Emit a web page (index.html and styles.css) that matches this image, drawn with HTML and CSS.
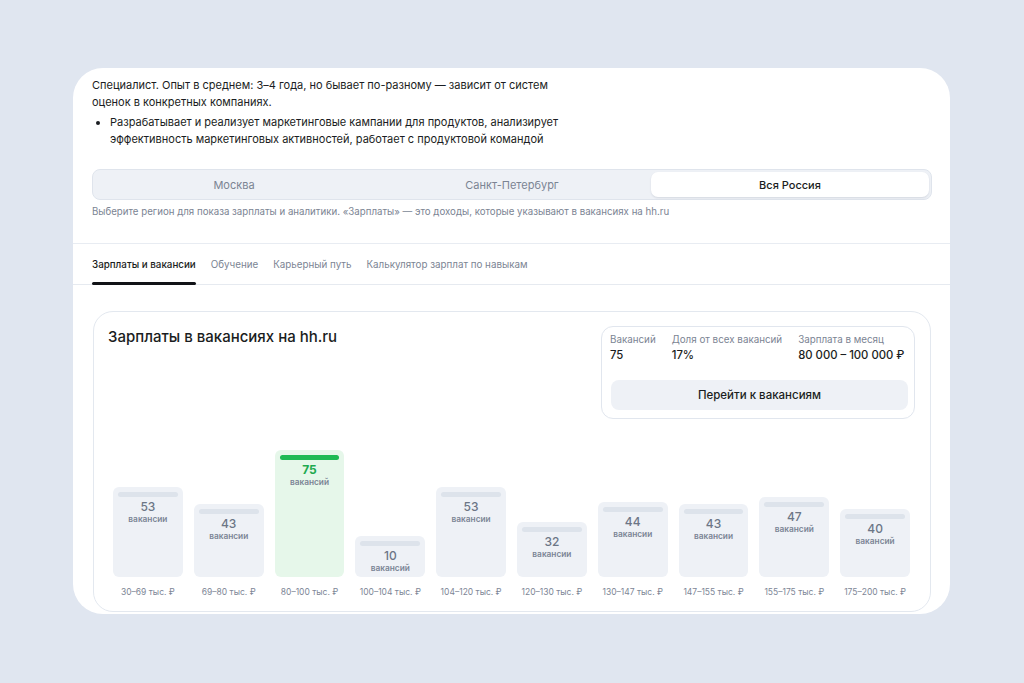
FILE: index.html
```html
<!DOCTYPE html>
<html lang="ru">
<head>
<meta charset="utf-8">
<title>Зарплаты</title>
<link rel="stylesheet" href="styles.css">
</head>
<body>
<div class="frame">
  <section class="intro">
    <p class="lead">Специалист. Опыт в среднем: 3–4 года, но бывает по-разному — зависит от систем<br>оценок в конкретных компаниях.</p>
    <ul class="duties">
      <li>Разрабатывает и реализует маркетинговые кампании для продуктов, анализирует<br>эффективность маркетинговых активностей, работает с продуктовой командой</li>
    </ul>
    <div class="segmented">
      <span class="seg">Москва</span>
      <span class="seg">Санкт-Петербург</span>
      <span class="seg seg-active">Вся Россия</span>
    </div>
    <p class="hint">Выберите регион для показа зарплаты и аналитики. «Зарплаты» — это доходы, которые указывают в вакансиях на hh.ru</p>
  </section>

  <nav class="tabs">
    <span class="tab tab-active">Зарплаты и вакансии</span>
    <span class="tab">Обучение</span>
    <span class="tab">Карьерный путь</span>
    <span class="tab">Калькулятор зарплат по навыкам</span>
  </nav>

  <section class="chart-card">
    <div class="chart-head">
      <h2 class="chart-title">Зарплаты в вакансиях на hh.ru</h2>
      <div class="stats">
        <div class="stats-row">
          <div class="stat"><div class="stat-label">Вакансий</div><div class="stat-value">75</div></div>
          <div class="stat"><div class="stat-label">Доля от всех вакансий</div><div class="stat-value">17%</div></div>
          <div class="stat"><div class="stat-label">Зарплата в месяц</div><div class="stat-value">80 000 – 100 000 ₽</div></div>
        </div>
        <button class="stats-btn">Перейти к вакансиям</button>
      </div>
    </div>

    <div class="bars">
      <div class="bar-col"><div class="bar" style="height:90px"><i class="pill"></i><b class="num">53</b><span class="unit">вакансии</span></div><span class="range">30–69 тыс. ₽</span></div>
      <div class="bar-col"><div class="bar" style="height:73px"><i class="pill"></i><b class="num">43</b><span class="unit">вакансии</span></div><span class="range">69–80 тыс. ₽</span></div>
      <div class="bar-col"><div class="bar bar-active" style="height:127px"><i class="pill"></i><b class="num">75</b><span class="unit">вакансий</span></div><span class="range">80–100 тыс. ₽</span></div>
      <div class="bar-col"><div class="bar" style="height:41px"><i class="pill"></i><b class="num">10</b><span class="unit">вакансий</span></div><span class="range">100–104 тыс. ₽</span></div>
      <div class="bar-col"><div class="bar" style="height:90px"><i class="pill"></i><b class="num">53</b><span class="unit">вакансии</span></div><span class="range">104–120 тыс. ₽</span></div>
      <div class="bar-col"><div class="bar" style="height:55px"><i class="pill"></i><b class="num">32</b><span class="unit">вакансии</span></div><span class="range">120–130 тыс. ₽</span></div>
      <div class="bar-col"><div class="bar" style="height:75px"><i class="pill"></i><b class="num">44</b><span class="unit">вакансии</span></div><span class="range">130–147 тыс. ₽</span></div>
      <div class="bar-col"><div class="bar" style="height:73px"><i class="pill"></i><b class="num">43</b><span class="unit">вакансии</span></div><span class="range">147–155 тыс. ₽</span></div>
      <div class="bar-col"><div class="bar" style="height:80px"><i class="pill"></i><b class="num">47</b><span class="unit">вакансий</span></div><span class="range">155–175 тыс. ₽</span></div>
      <div class="bar-col"><div class="bar" style="height:68px"><i class="pill"></i><b class="num">40</b><span class="unit">вакансий</span></div><span class="range">175–200 тыс. ₽</span></div>
    </div>
  </section>
</div>
</body>
</html>
```

FILE: styles.css
```css
* { box-sizing: border-box; }

html, body {
  margin: 0;
  padding: 0;
}

body {
  width: 1024px;
  height: 683px;
  overflow: hidden;
  background: #e0e6f0;
  font-family: Inter, "Noto Sans", "Liberation Sans", sans-serif;
  color: #1f2329;
  padding: 68px 0 0 73px;
}

.frame {
  width: 877px;
  height: 546px;
  background: #ffffff;
  border-radius: 30px;
  overflow: hidden;
}

/* intro */
.intro {
  padding: 9px 18px 24px 19px;
  border-bottom: 1px solid #e8ecf2;
}

.lead {
  margin: 0;
  font-size: 11px;
  line-height: 17px;
  color: #1a1d22;
}

.duties {
  margin: 3px 0 0;
  padding: 0 0 0 18px;
  font-size: 11px;
  line-height: 17px;
  color: #1a1d22;
}

.segmented {
  margin-top: 21px;
  height: 31px;
  display: grid;
  grid-template-columns: repeat(3, 1fr);
  padding: 2px;
  background: #eef1f6;
  border: 1px solid #dfe4ec;
  border-radius: 8px;
}

.seg {
  display: flex;
  align-items: center;
  justify-content: center;
  font-size: 11px;
  color: #7b8493;
  border-radius: 7px;
}

.seg-active {
  background: #ffffff;
  color: #1a1d21;
  font-weight: 500;
  box-shadow: 0 1px 2px rgba(30, 45, 70, 0.12);
}

.hint {
  margin: 5px 0 0;
  font-size: 9.7px;
  line-height: 14px;
  color: #7b8493;
}

/* tabs */
.tabs {
  display: flex;
  gap: 15px;
  padding: 0 19px;
  height: 41px;
  border-bottom: 1px solid #e6eaf0;
}

.tab {
  position: relative;
  padding-top: 14px;
  font-size: 9.8px;
  line-height: 14px;
  color: #7b8493;
}

.tab-active {
  color: #1a1d21;
  font-weight: 500;
}

.tab-active::after {
  content: "";
  position: absolute;
  left: 0;
  right: 0;
  bottom: -1px;
  height: 3px;
  border-radius: 2px;
  background: #111317;
}

/* chart card */
.chart-card {
  margin: 26px 19px 0 20px;
  height: 301px;
  border: 1px solid #e3e8ef;
  border-radius: 20px;
}

.chart-head {
  display: flex;
  justify-content: space-between;
  align-items: flex-start;
  padding: 14px 15px 0 14px;
}

.chart-title {
  margin: 1px 0 0;
  font-size: 15px;
  line-height: 20px;
  font-weight: 500;
  color: #1a1d21;
}

.stats {
  width: 314px;
  height: 93px;
  border: 1px solid #e1e6ee;
  border-radius: 12px;
  padding: 6px 7px 7px 8px;
}

.stats-row {
  display: flex;
  gap: 16px;
  white-space: nowrap;
}

.stat-label {
  font-size: 9.8px;
  line-height: 14px;
  color: #7b8493;
}

.stat-value {
  font-size: 11.3px;
  line-height: 16px;
  font-weight: 500;
  color: #1a1d21;
}

.stats-btn {
  display: block;
  width: 297px;
  height: 30px;
  margin: 17px 0 0 1px;
  border: 0;
  border-radius: 8px;
  background: #eef1f6;
  font-family: inherit;
  font-size: 11.5px;
  font-weight: 500;
  color: #1a1d21;
}

/* bars */
.bars {
  display: grid;
  grid-template-columns: repeat(10, 1fr);
  column-gap: 11px;
  align-items: end;
  padding: 0 20px 0 19px;
  margin-top: 31px;
}

.bar-col {
  display: flex;
  flex-direction: column;
  align-items: stretch;
}

.bar {
  display: flex;
  flex-direction: column;
  align-items: center;
  padding: 5px 5px 0;
  background: #eef1f6;
  border-radius: 6px;
}

.pill {
  display: block;
  align-self: stretch;
  height: 5px;
  border-radius: 3px;
  background: #dde3eb;
}

.num {
  margin-top: 3px;
  font-size: 12px;
  line-height: 14px;
  font-weight: 500;
  color: #6c7686;
}

.unit {
  font-size: 8.3px;
  line-height: 11px;
  font-weight: 600;
  color: #7a8494;
}

.bar-active {
  background: #e6f7ea;
}

.bar-active .pill {
  background: #1fba55;
}

.bar-active .num {
  font-weight: 700;
  color: #1faa50;
}

.range {
  margin-top: 8px;
  text-align: center;
  font-size: 8.5px;
  line-height: 14px;
  color: #7d8696;
  white-space: nowrap;
}
```
